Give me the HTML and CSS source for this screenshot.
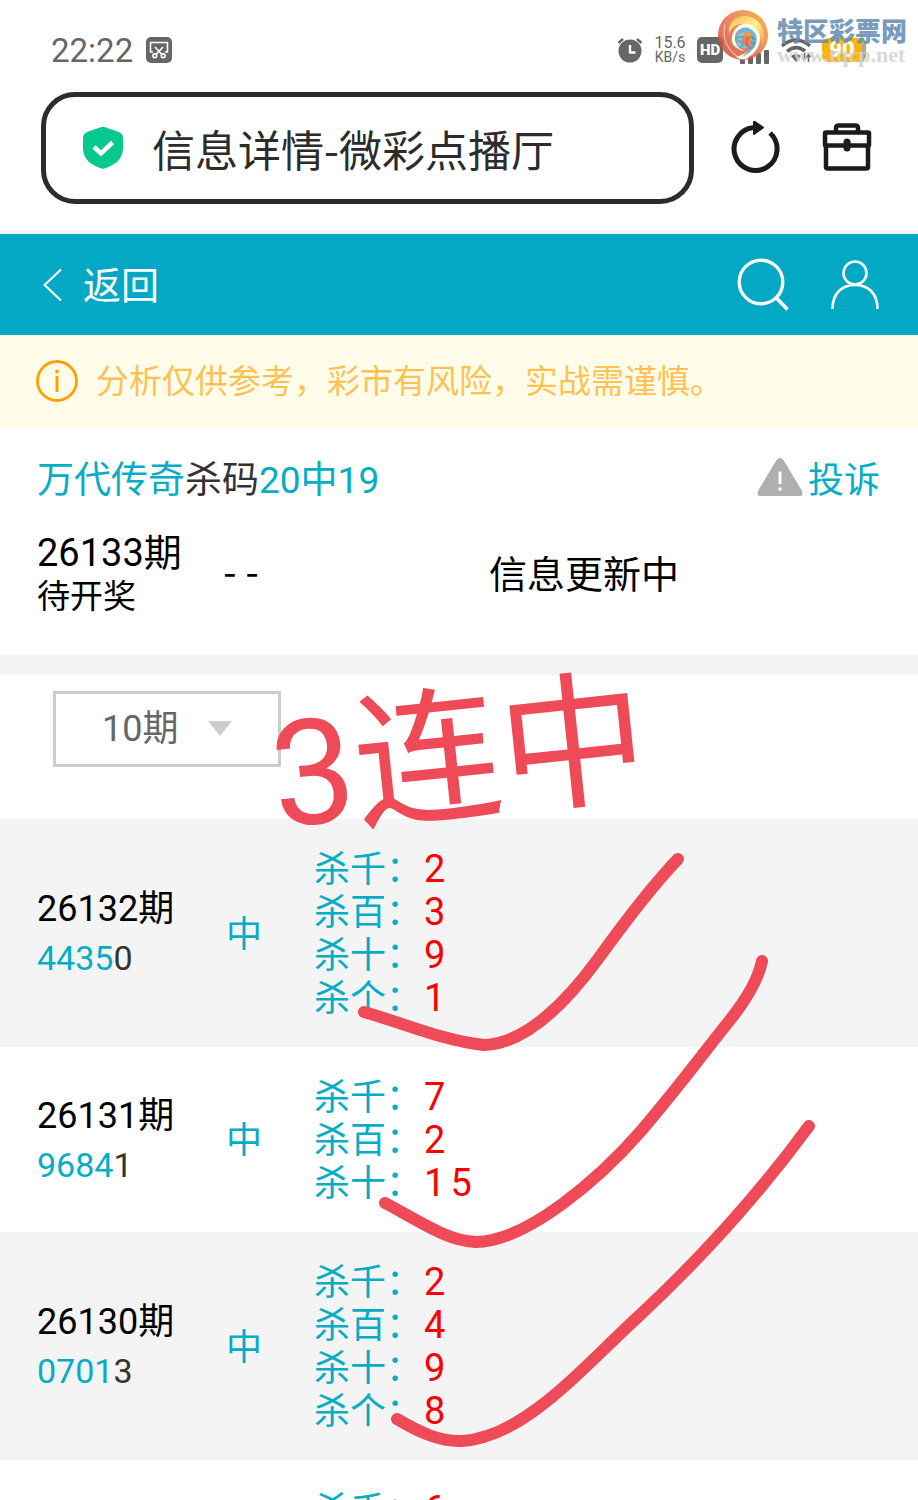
FILE: index.html
```html
<!DOCTYPE html>
<html lang="zh-CN">
<head>
<meta charset="utf-8">
<meta name="viewport" content="width=device-width, initial-scale=1">
<title>信息详情-微彩点播厅</title>
<link rel="stylesheet" href="styles.css">
</head>
<body>
<div class="page">
  <div class="status">
    <div class="status-left">
      <span class="clock">22:22</span>
      <svg width="26" height="26" viewBox="0 0 26 26" fill="none" stroke="#fff" stroke-width="1.6">
        <rect width="26" height="26" rx="5" fill="#666" stroke="none"/>
        <path d="M7 15H4.500V5.500H21.500V15H19M9 10L16 17.500M17 10L10 17.500"/>
        <circle cx="8.800" cy="18.800" r="1.900"/><circle cx="17.200" cy="18.800" r="1.900"/>
      </svg>
    </div>
    <div class="status-right">
      <svg width="26" height="26" viewBox="0 0 26 26">
        <circle cx="13" cy="14" r="11.500" fill="#666"/>
        <path d="M1.500 6L6 2M24.500 6L20 2" stroke="#666" stroke-width="2.500"/>
        <path d="M13 8V15.500H18.500" fill="none" stroke="#fff" stroke-width="2.400"/>
      </svg>
      <span class="speed"><span>15.6</span><span>KB/s</span></span>
      <span class="hd">HD</span>
      <span class="cell">
        <span class="cell-label">5G</span>
        <svg width="30" height="14" viewBox="0 0 30 14" fill="#666"><rect y="9" width="5" height="5" rx="1"/><rect x="8" y="6" width="5" height="8" rx="1"/><rect x="16" y="3" width="5" height="11" rx="1"/><rect x="24" width="5" height="14" rx="1"/></svg>
      </span>
      <svg class="wifi" width="30" height="26" viewBox="0 0 30 26" fill="none" stroke="#666" stroke-width="3.500">
        <path d="M1 9Q15 -3 29 9M6 14.500Q15 7 24 14"/><path d="M10 19Q15 15 20 19L15 25Z" fill="#666" stroke="none"/>
        <path d="M23.500 16V22M21.500 20L23.500 22.500L25.500 20M27.500 25V18M25.500 20L27.500 17.500L29.500 20" stroke-width="1.600"/>
      </svg>
      <span class="battery">90</span>
    </div>
  </div>
  <div class="watermark">
    <svg width="52" height="52" viewBox="0 0 52 52">
      <defs>
        <linearGradient id="outer" x1="0" y1="1" x2="1" y2="0"><stop offset="0" stop-color="#c83e2a"/><stop offset=".5" stop-color="#e57350"/><stop offset="1" stop-color="#f2b02c"/></linearGradient>
        <linearGradient id="gold" x1="0" y1="0" x2="1" y2="1"><stop offset="0" stop-color="#f5a52f"/><stop offset=".5" stop-color="#fff07a"/><stop offset="1" stop-color="#f08a30"/></linearGradient>
      </defs>
      <circle cx="26" cy="26" r="25" fill="url(#outer)"/>
      <path d="M12 25C10 13 21 4 34 8C46 13 50 26 45 37C43 22 36 15 26 15C19 15 14 19 12 25Z" fill="url(#gold)"/>
      <path d="M15 27C18 15 30 11 39 19C47 28 43 42 29 50C25 51 22 50 19 48C36 43 41 32 35 24C29 16 18 19 18 29C18 36 23 40 28 42C19 41 13 35 15 27Z" fill="#fff8e4"/>
      <path d="M19 29C19 17 32 15 38 24C43 33 36 43 25 48C34 40 37 33 33 27C28 21 21 22 19 29Z" fill="#4fabcf"/>
      <path d="M19 29C18 37 24 42 33 38C27 37 24 34 25 29C26 26 28 25 31 26C26 21 20 24 19 29Z" fill="#68c0d4"/>
      <path d="M26 25C32 19 39 26 33 33C33 29 30 25 26 25Z" fill="#e88d28"/>
      <path d="M8 15C4 31 12 43 24 50" fill="none" stroke="#fff" stroke-width="1.200" opacity=".5"/>
    </svg>
    <div class="watermark-text"><span class="wm-name">特区彩票网</span><span class="wm-url">www.tqcp.net</span></div>
  </div>

  <div class="browser">
    <div class="address">
      <svg width="40" height="44" viewBox="0 0 40 44"><path d="M17 1.500Q20 0 23 1.500L36 6Q40 8 40 12V22C40 34 31 39 23 42Q20 43.500 17 42C9 39 0 34 0 22V12Q0 8 4 6Z" fill="#05c98f"/><path d="M11 21L18 27.500L29.500 16.500" fill="none" stroke="#fff" stroke-width="4.500"/></svg>
      <span>信息详情-微彩点播厅</span>
    </div>
    <button class="icon-btn" aria-label="刷新">
      <svg width="50" height="54" viewBox="0 0 50 54"><path d="M40 12A21.500 21.500 0 1 1 24 6.500" fill="none" stroke="#1b1b1b" stroke-width="5"/><path d="M24 0.500L33 6.500L24 13Z" fill="#1b1b1b" stroke="#1b1b1b" stroke-width="2" stroke-linejoin="round"/></svg>
    </button>
    <button class="icon-btn" aria-label="工具箱">
      <svg width="50" height="50" viewBox="0 0 50 50" fill="none" stroke="#1b1b1b" stroke-width="4.500" stroke-linejoin="round"><path d="M14 9V5Q14 2.500 17 2.500H33Q36 2.500 36 5V9M4 22V44Q4 45.500 6 45.500H44Q46 45.500 46 44V22"/><rect x="3" y="9.500" width="44" height="13" rx="1"/><path d="M25 19V25" stroke-width="7" stroke-linecap="round"/></svg>
    </button>
  </div>

  <header class="topbar">
    <a class="back" href="#"><svg width="20" height="34" viewBox="0 0 20 34" fill="none" stroke="#fff" stroke-width="2.200"><path d="M18 1.500L1.500 17L18 32.500"/></svg><span class="lift">返回</span></a>
    <a class="top-icon" href="#" aria-label="搜索"><svg width="52" height="54" viewBox="0 0 52 54" fill="none" stroke="#fff"><circle cx="24" cy="24" r="21.800" stroke-width="3.400"/><path d="M39 39.500L50.500 51.500" stroke-width="3.600"/></svg></a>
    <a class="top-icon" href="#" aria-label="我的"><svg width="50" height="50" viewBox="0 0 50 50" fill="none" stroke="#fff" stroke-width="2.600"><circle cx="25" cy="13" r="11.500"/><path d="M2.500 49C2.500 33 12 25 25 25S47.500 33 47.500 49"/></svg></a>
  </header>

  <div class="notice">
    <svg width="42" height="42" viewBox="0 0 42 42"><circle cx="21" cy="21" r="19.500" fill="none" stroke="#ff9f00" stroke-width="2.800"/><path d="M21 16V32" stroke="#ff9f00" stroke-width="3"/><circle cx="21" cy="11.500" r="2" fill="#ff9f00"/></svg>
    <span class="lift">分析仅供参考，彩市有风险，实战需谨慎。</span>
  </div>

  <main>
    <section class="summary">
      <div class="headline">
        <h1>万代传奇<span class="dark">杀码</span>20中19</h1>
        <a class="report" href="#"><svg width="46" height="38" viewBox="0 0 46 38"><path d="M19.500 2Q23 -2 26.500 2L45 33Q47 38 42 38H4Q-1 38 1 33Z" fill="#b0b0b0"/><path d="M23 13.500V26" stroke="#fff" stroke-width="3"/><circle cx="23" cy="31" r="1.800" fill="#fff"/></svg>投诉</a>
      </div>
      <div class="pending">
        <div class="pending-issue"><span class="issue-large">26133期</span><span class="wait">待开奖</span></div>
        <div class="dashes"><span>-</span><span>-</span></div>
        <div class="updating">信息更新中</div>
      </div>
    </section>

    <div class="filter">
      <div class="select-box">
        <select aria-label="期数"><option>10期</option></select>
        <svg class="caret" width="24" height="15" viewBox="0 0 24 15"><path d="M0 0H24L12 15Z" fill="#ccc"/></svg>
      </div>
    </div>

    <table class="records">
      <colgroup><col class="col-issue"><col class="col-result"><col></colgroup>
      <tbody>
      <tr>
        <td class="issue"><div>26132期</div><div class="draw">4435<span class="dark">0</span></div></td>
        <td class="result">中</td>
        <td class="picks"><div>杀千：<b>2</b></div><div>杀百：<b>3</b></div><div>杀十：<b>9</b></div><div>杀个：<b>1</b></div></td>
      </tr>
      <tr>
        <td class="issue"><div>26131期</div><div class="draw">9684<span class="dark">1</span></div></td>
        <td class="result">中</td>
        <td class="picks"><div>杀千：<b>7</b></div><div>杀百：<b>2</b></div><div>杀十：<b>1</b><b>5</b></div></td>
      </tr>
      <tr>
        <td class="issue"><div>26130期</div><div class="draw">0701<span class="dark">3</span></div></td>
        <td class="result">中</td>
        <td class="picks"><div>杀千：<b>2</b></div><div>杀百：<b>4</b></div><div>杀十：<b>9</b></div><div>杀个：<b>8</b></div></td>
      </tr>
      <tr>
        <td class="issue"></td>
        <td class="result"></td>
        <td class="picks"><div>杀千：<b>6</b></div></td>
      </tr>
      </tbody>
    </table>
  </main>

  <div class="scrawl">3连中</div>
  <svg class="strokes" width="918" height="1500" viewBox="0 0 918 1500" fill="none" stroke="#ee4a58" stroke-width="12" stroke-linecap="round" stroke-linejoin="round">
    <path d="M364 1012C403 1023 444 1041 484 1045C526 1044 568 1000 598 959C624 923 650 888 678 859"/>
    <path d="M385 1203C416 1219 446 1241 476 1242C528 1241 600 1178 641 1131C682 1083 708 1047 730 1020C746 1000 758 981 762 961"/>
    <path d="M397 1419C419 1432 440 1442 462 1441C524 1437 579 1371 640 1315C700 1259 759 1194 809 1126"/>
  </svg>
</div>
</body>
</html>
```
FILE: styles.css
```css
* { box-sizing: border-box; }
body { margin: 0; background: #fff; color: #000; font-family: Roboto, "Noto Sans CJK SC", sans-serif; }
a { color: inherit; text-decoration: none; }
svg { display: block; flex: none; }
.page { position: relative; height: 100vh; overflow: hidden; }
.dark { color: #333; }
.lift { padding-bottom: 5px; }

.status { display: flex; justify-content: space-between; height: 92px; padding: 16px 52px 8px 51px; color: #666; }
.status-left, .status-right { display: flex; align-items: center; }
.status-left { gap: 13px; }
.clock { font-size: 33px; }
.status-right { gap: 11px; }
.speed { display: flex; flex-direction: column; width: 32px; font-size: 14px; line-height: 14px; text-align: center; }
.speed span:first-child { font-size: 16px; }
.hd { width: 26px; border-radius: 5px; background: #666; color: #fff; font-size: 15px; font-weight: 900; line-height: 26px; text-align: center; }
.cell { display: flex; flex-direction: column; width: 36px; align-items: flex-start; font-size: 18px; font-weight: 700; line-height: 14px; }
.cell svg { align-self: flex-end; }
.battery { width: 44px; border-radius: 6px; background: #fcb40c; color: #fff; font-size: 22px; font-weight: 900; line-height: 24px; text-align: center; border-right: 4px solid #b3a78b; }

.watermark { position: absolute; top: 9px; right: 9px; display: flex; gap: 8px; opacity: 0.85; }
.watermark-text { display: flex; flex-direction: column; width: 132px; padding-top: 9px; }
.wm-name { color: #628bb2; font-size: 26px; font-weight: 900; line-height: 28px; }
.wm-url { color: #d2d2d2; font-family: "Liberation Serif", serif; font-size: 22px; font-weight: 700; line-height: 18px; }

.browser { display: flex; align-items: center; height: 142px; padding: 0 46px 28px 41px; border-bottom: 3px solid #f4f4f4; }
.address { display: flex; flex: 1; align-items: center; gap: 29px; height: 112px; padding-left: 37px; border: 5px solid #2c2c2c; border-radius: 34px; color: #2c2c2c; font-family: "Noto Sans CJK SC", sans-serif; font-size: 43px; }
.icon-btn { padding: 0; border: 0; background: none; }
.address + .icon-btn { margin: 0 42px 0 36px; }

.topbar { display: flex; align-items: center; height: 101px; padding: 0 38px 0 43px; background: #03a9c4; color: #fff; }
.back { display: flex; flex: 1; align-items: center; gap: 20px; font-size: 38px; }
.top-icon + .top-icon { margin-left: 41px; }

.notice { display: flex; align-items: center; gap: 18px; height: 92px; padding: 0 36px; background: #fffde9; color: #ffc152; font-size: 33px; }

.summary { height: 248px; padding: 28px 38px 0 37px; border-bottom: 20px solid #f4f4f4; }
.headline { display: flex; align-items: center; justify-content: space-between; height: 44px; color: #05adc5; font-size: 36px; }
h1 { margin: 0; font-size: 37px; font-weight: 400; }
.report { display: flex; align-items: center; gap: 5px; }
.pending { display: grid; grid-template-columns: 153px 102px 1fr; align-items: center; margin-top: 33px; }
.pending-issue { display: flex; flex-direction: column; line-height: 43px; }
.issue-large { font-size: 38px; }
.wait { font-size: 33px; }
.dashes { display: flex; justify-content: center; gap: 9px; padding-bottom: 12px; font-family: "Noto Sans CJK SC", sans-serif; font-size: 38px; line-height: 43px; }
.updating { padding-right: 4px; font-size: 38px; line-height: 43px; text-align: center; }

.filter { height: 144px; padding: 16px 53px; }
.select-box { position: relative; width: 228px; }
select { width: 100%; height: 76px; padding: 0 46px; border: 3px solid #ccc; border-radius: 0; background: #fff; color: #666; font-family: inherit; font-size: 36px; appearance: none; }
.caret { position: absolute; top: 30px; right: 49px; pointer-events: none; }

.records { width: 100%; border-collapse: collapse; table-layout: fixed; font-size: 36px; }
.col-issue { width: 190px; }
.col-result { width: 108px; }
.records tr:nth-child(odd) { background: #f4f4f4; }
.records td { padding: 0; }
.records .issue { padding-top: 2px; padding-left: 37px; line-height: 49px; }
.draw { color: #05adc5; font-size: 34px; }
.records .result { padding-bottom: 5px; color: #05adc5; text-align: center; }
.records .picks { padding: 29px 0 27px 16px; color: #05adc5; line-height: 43px; }
.picks div { height: 43px; }
.picks b { margin: 0 3px 0 2px; font-size: 38px; color: #f00; font-weight: 400; }

.scrawl { position: absolute; top: 658px; left: 271px; color: #ee4a58; font-size: 147px; line-height: 200px; white-space: nowrap; transform: rotate(-6deg); }
.strokes { position: absolute; top: 0; left: 0; pointer-events: none; }
```
